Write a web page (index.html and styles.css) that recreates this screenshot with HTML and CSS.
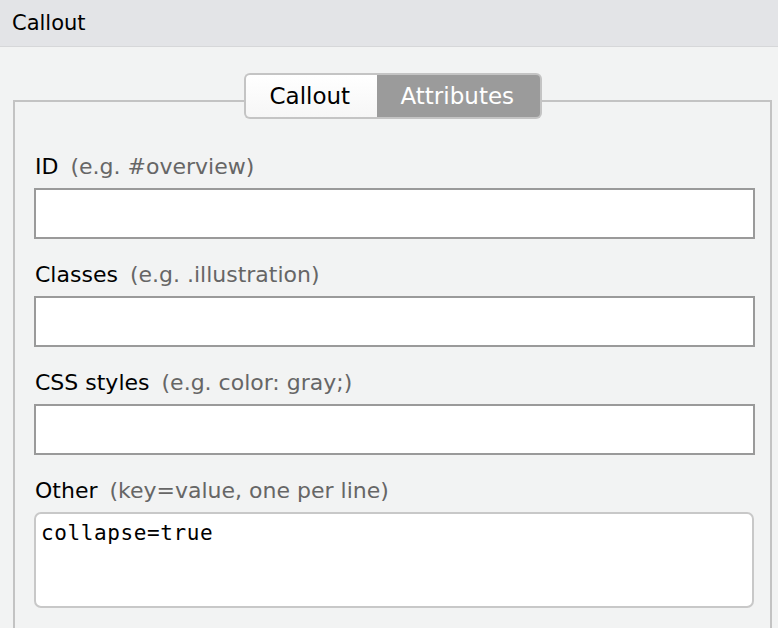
FILE: index.html
```html
<!DOCTYPE html>
<html>
<head>
<meta charset="utf-8">
<link rel="stylesheet" href="styles.css">
</head>
<body>
<div class="header">Callout</div>
<div class="main">
  <div class="panel">
    <div class="tabs">
      <div class="tab">Callout</div>
      <div class="tab active">Attributes</div>
    </div>
    <div class="field">
      <div class="label">ID<span class="hint">(e.g. #overview)</span></div>
      <div class="input"></div>
    </div>
    <div class="field">
      <div class="label">Classes<span class="hint">(e.g. .illustration)</span></div>
      <div class="input"></div>
    </div>
    <div class="field">
      <div class="label">CSS styles<span class="hint">(e.g. color: gray;)</span></div>
      <div class="input"></div>
    </div>
    <div class="field">
      <div class="label">Other<span class="hint">(key=value, one per line)</span></div>
      <div class="textarea">collapse=true</div>
    </div>
  </div>
</div>
</body>
</html>
```

FILE: styles.css
```css
html, body {
  margin: 0;
  padding: 0;
  height: 100%;
  overflow: hidden;
}
body {
  background: #f2f3f3;
  font-family: "DejaVu Sans", sans-serif;
  color: #000;
}
.header {
  height: 46px;
  line-height: 46px;
  background: #e3e4e7;
  border-bottom: 1px solid #d6d7d9;
  padding-left: 12px;
  font-size: 21px;
}
.main {
  padding: 53px 6px 0 13px;
}
.panel {
  border: 2px solid #c3c3c3;
  border-bottom: none;
  padding: 0 15px 40px 19px;
  height: 600px;
}
.tabs {
  display: flex;
  justify-content: center;
  margin: -29px -15px 34px -19px;
}
.tab {
  height: 42px;
  line-height: 42px;
  font-size: 23px;
  border: 2px solid #c4c4c4;
  background: linear-gradient(#ffffff, #f6f6f6);
  color: #000;
  padding: 0 24px;
}
.tab:first-child {
  border-radius: 6px 0 0 6px;
  border-right: none;
  width: 83px;
}
.tab.active {
  background: #9b9b9b;
  color: #fff;
  border-left: none;
  border-radius: 0 6px 6px 0;
  width: 115px;
}
.field {
  margin-bottom: 22px;
}
.label {
  font-size: 22px;
  line-height: 28px;
  margin-bottom: 7px;
  padding-left: 1px;
}
.hint {
  color: #666;
  margin-left: 12px;
}
.input {
  height: 47px;
  border: 2px solid #9a9a9a;
  background: #fff;
}
.textarea {
  width: 711px;
  height: 87px;
  border: 2px solid #c8c8c8;
  border-radius: 7px;
  background: #fff;
  font-family: "DejaVu Sans Mono", monospace;
  font-size: 21px;
  letter-spacing: 0.6px;
  line-height: 28px;
  padding: 5px 0 0 5px;
  box-sizing: content-box;
}
```
